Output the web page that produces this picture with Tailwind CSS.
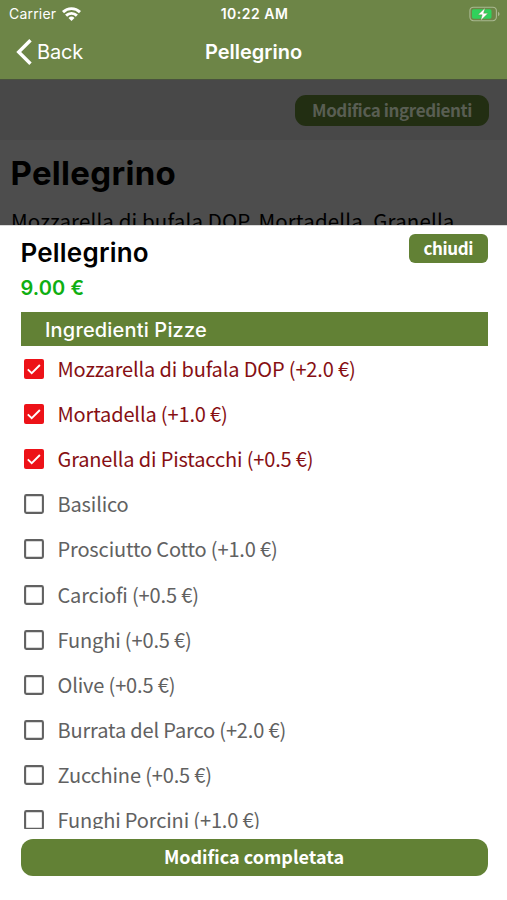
<!DOCTYPE html>
<html lang="it">
<head>
<meta charset="utf-8">
<title>Pellegrino</title>
<script src="https://cdn.jsdelivr.net/npm/@tailwindcss/browser@4"></script>
</head>
<body class="relative h-[900px] w-[507px] overflow-hidden bg-white font-['Noto_Sans_CJK_JP','Noto_Sans',sans-serif]">
<svg class="hidden">
  <symbol id="on" viewBox="0 0 20 20"><rect width="20" height="20" rx="2" fill="#ed1218"/><path d="M3.8 10.4l3.9 3.8 8.2-8.2" fill="none" stroke="#fff" stroke-width="1.9"/></symbol>
  <symbol id="off" viewBox="0 0 20 20"><rect x="1.1" y="1.1" width="17.8" height="17.8" rx="1.3" fill="none" stroke="#616161" stroke-width="2.1"/></symbol>
</svg>
<header class="h-[79px] bg-[#6d8547] font-['Inter',sans-serif] text-white">
  <div class="grid h-[27px] grid-cols-3 items-center pl-[9px] pr-[7px] text-[14px]">
    <div class="flex items-center gap-[6px]"><span class="tracking-[0.2px]">Carrier</span>
      <svg class="h-[14px] w-[19px]" viewBox="0 0 19 14" fill="none" stroke="#fff" stroke-width="2.9"><path d="M1 5.1a12.2 12.2 0 0 1 17 0M4.1 8.6a7.7 7.7 0 0 1 10.8 0"/><path d="M9.5 14l-3-3a4.3 4.3 0 0 1 6 0z" fill="#fff" stroke="none"/></svg>
    </div>
    <div class="text-center font-semibold tracking-[0.5px]"><span>10:22 AM</span></div>
    <svg class="h-[16px] w-[31px] justify-self-end" viewBox="0 0 31 16"><rect x=".9" y="1.2" width="26.5" height="13.5" rx="3.6" fill="none" stroke="#a9b891" stroke-width="1.1"/><rect x="3" y="3.2" width="19.5" height="9.5" rx="1.7" fill="#30d15b"/><path d="M29 5.7v4.5q1.6-.8 1.6-2.2T29 5.7z" fill="#a9b891"/><path d="M16 2L9 8.8h4.2l-1.5 5.6L19 7.3h-4.4z" fill="#fff" stroke="#6d8547" stroke-width=".4"/></svg>
  </div>
  <div class="grid h-[50px] grid-cols-3 items-center px-[16px] text-[20px]">
    <div class="flex items-center gap-[5px]"><svg class="h-[26px] w-[16px]" viewBox="0 0 16 26" fill="none" stroke="#fff" stroke-width="3.4"><path d="M14.5 1.3L2.7 13l11.8 11.7"/></svg><span class="tracking-[-0.2px]">Back</span></div>
    <div class="text-center font-semibold"><span>Pellegrino</span></div>
  </div>
</header>
<main class="h-[146px] overflow-hidden bg-[#4d4d4d]">
  <div class="flex h-[61px] justify-end border-t border-[#49523d] bg-[#484848] pr-[18px] pt-[15px]">
    <div class="flex h-[31px] w-[194px] items-center justify-center rounded-[11px] bg-[#222e12] text-[17px] font-bold tracking-[-0.4px] text-[#595e53]"><span class="-mt-px">Modifica ingredienti</span></div>
  </div>
  <h1 class="mt-[10px] pl-[10.5px] font-['Inter',sans-serif] text-[33px] font-bold leading-[46px] tracking-[0.3px] text-black"><span>Pellegrino</span></h1>
  <p class="mt-[9px] whitespace-nowrap pl-[11px] text-[20.5px] leading-[30px] tracking-[0.13px] text-black"><span>Mozzarella di bufala DOP, Mortadella, Granella</span></p>
</main>
<section class="flex h-[675px] flex-col border-t border-[#d9d9d9] bg-white px-[20.5px]">
  <div class="flex h-[86px] justify-between pr-[-1px]">
    <div class="font-['Inter',sans-serif] font-semibold">
      <h2 class="mt-[8px] text-[26px] leading-[38px] tracking-[0.2px] text-black"><span>Pellegrino</span></h2>
      <p class="text-[20px] leading-[32px] tracking-[0.1px] text-[#0faf12]"><span>9.00 €</span></p>
    </div>
    <button class="mr-[-1px] mt-[7.5px] flex h-[29.5px] w-[78.5px] items-center justify-center rounded-[6px] bg-[#628135] text-[17px] font-bold tracking-[-0.4px] text-white"><span class="-mt-px">chiudi</span></button>
  </div>
  <h3 class="h-[34px] w-[467px] bg-[#628135] pl-[24.5px] font-['Inter',sans-serif] text-[20px] font-medium leading-[36px] tracking-[0.17px] text-white"><span>Ingredienti Pizze</span></h3>
  <ul class="h-[483px] overflow-hidden text-[20px] tracking-[-0.15px] text-[#616161] [&>li]:flex [&>li]:h-[45.2px] [&>li]:items-center [&>li]:gap-[13.5px] [&>li]:pl-[3.5px] [&_svg]:size-[20px]">
    <li class="text-[#860f13]"><svg><use href="#on"/></svg><span>Mozzarella di bufala DOP (+2.0 €)</span></li>
    <li class="text-[#860f13]"><svg><use href="#on"/></svg><span>Mortadella (+1.0 €)</span></li>
    <li class="text-[#860f13]"><svg><use href="#on"/></svg><span>Granella di Pistacchi (+0.5 €)</span></li>
    <li><svg><use href="#off"/></svg><span>Basilico</span></li>
    <li><svg><use href="#off"/></svg><span>Prosciutto Cotto (+1.0 €)</span></li>
    <li><svg><use href="#off"/></svg><span>Carciofi (+0.5 €)</span></li>
    <li><svg><use href="#off"/></svg><span>Funghi (+0.5 €)</span></li>
    <li><svg><use href="#off"/></svg><span>Olive (+0.5 €)</span></li>
    <li><svg><use href="#off"/></svg><span>Burrata del Parco (+2.0 €)</span></li>
    <li><svg><use href="#off"/></svg><span>Zucchine (+0.5 €)</span></li>
    <li><svg><use href="#off"/></svg><span>Funghi Porcini (+1.0 €)</span></li>
  </ul>
  <button class="mt-[10px] flex h-[36.5px] w-[467px] items-center justify-center rounded-[12px] bg-[#628135] text-[18px] font-bold text-white"><span class="-mt-px">Modifica completata</span></button>
</section>
</body>
</html>
